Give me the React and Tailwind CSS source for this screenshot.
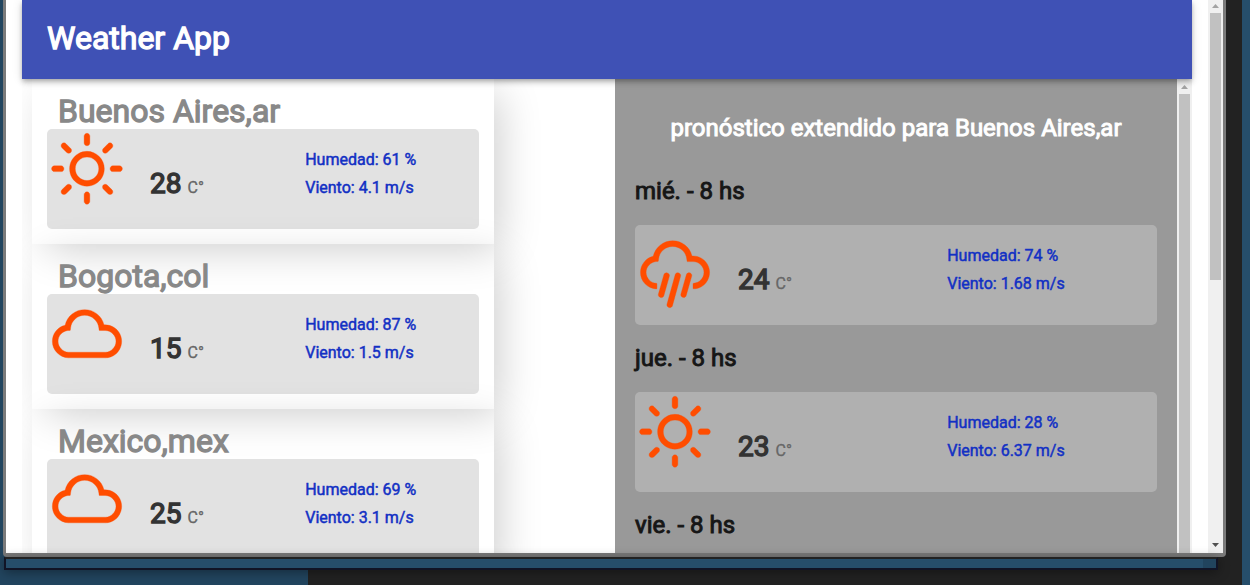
import React from "react";
import { WiDaySunny, WiCloud, WiRain } from "react-icons/wi";

const cities = [
  { name: "Buenos Aires,ar", data: { Icon: WiDaySunny, temp: 28, humidity: 61, wind: "4.1 m/s" } },
  { name: "Bogota,col", data: { Icon: WiCloud, temp: 15, humidity: 87, wind: "1.5 m/s" } },
  { name: "Mexico,mex", data: { Icon: WiCloud, temp: 25, humidity: 69, wind: "3.1 m/s" } },
];

const forecast = [
  { label: "mié. - 8 hs", data: { Icon: WiRain, temp: 24, humidity: 74, wind: "1.68 m/s" } },
  { label: "jue. - 8 hs", data: { Icon: WiDaySunny, temp: 23, humidity: 28, wind: "6.37 m/s" } },
  { label: "vie. - 8 hs" },
];

function WeatherData({ Icon, temp, humidity, wind, className }) {
  return (
    <div className={`flex h-[100px] overflow-hidden rounded-[5px] ${className}`}>
      <div className="flex w-3/5 shrink-0">
        <Icon
          className="-ml-[10px] -mt-[9px] size-[100px] shrink-0 text-[#ff4d00]"
          strokeWidth="0.1"
          aria-hidden="true"
        />
        <p className="ml-[13px] mt-[39px] whitespace-nowrap leading-8">
          <span className="text-[28px] text-[#333] [-webkit-text-stroke:0.05em]">{temp}</span>
          <span className="ml-[6px] text-base text-[#666] [-webkit-text-stroke:0.02em]">C°</span>
        </p>
      </div>
      <div className="-ml-px mt-[17px] whitespace-nowrap text-base leading-7 text-[#1230c4] [-webkit-text-stroke:0.03em]">
        <p>Humedad: {humidity} %</p>
        <p>Viento: {wind}</p>
      </div>
    </div>
  );
}

function Scrollbar({ thumb, className = "", arrowDown }) {
  return (
    <div className={`flex w-[15px] shrink-0 flex-col items-center bg-[#f0f0f0] ${className}`} aria-hidden="true">
      <svg className="h-[15px] w-[15px] shrink-0" viewBox="0 0 15 15">
        <path d="M4 10 L7.5 6 L11 10 Z" fill="#a3a3a3" />
      </svg>
      <div className={`w-[11px] bg-[#c1c1c1] ${thumb}`} />
      {arrowDown && (
        <svg className="mt-auto h-[15px] w-[15px] shrink-0" viewBox="0 0 15 15">
          <path d="M4 5 L11 5 L7.5 9 Z" fill="#505050" />
        </svg>
      )}
    </div>
  );
}

export default function App() {
  return (
    <div className="relative isolate flex h-screen flex-col overflow-hidden bg-[#222] font-['Roboto',sans-serif]">
      <div className="absolute inset-y-0 left-0 -z-10 w-[308px] bg-[#22455f]" />
      <div className="absolute inset-y-0 right-0 -z-10 w-2 bg-[#264e6b]" />

      <div className="ml-[3px] mr-6 flex min-h-0 flex-1 overflow-hidden rounded-b-[4px] border-x-[3px] border-b-[4px] border-[#7b7b7b] bg-white">
        <div className="flex min-w-0 flex-1 flex-col px-4">
          <header className="z-10 flex h-[79px] shrink-0 items-center bg-[#3f51b5] px-[25px] pb-1 shadow-[0_2px_4px_-1px_rgba(0,0,0,0.2),0_4px_5px_0_rgba(0,0,0,0.14),0_1px_10px_0_rgba(0,0,0,0.12)]">
            <h1 className="text-[32px] font-normal leading-10 text-white [-webkit-text-stroke:0.04em]">Weather App</h1>
          </header>
          <main className="flex min-h-0 flex-1">
            <section className="w-1/2 overflow-hidden pl-[10px]">
              {cities.map(({ name, data }) => (
                <article key={name} className="w-[462px] p-[15px] shadow-[10px_10px_40px_-5px_rgba(0,0,0,0.2)]">
                  <h2 className="pl-[11px] text-[32px] font-normal leading-[35px] text-[#888] [-webkit-text-stroke:0.04em]">
                    {name}
                  </h2>
                  <WeatherData {...data} className="bg-[#e2e2e2]" />
                </article>
              ))}
            </section>
            <section className="flex w-1/2 overflow-hidden pl-2">
              <div className="min-w-0 flex-1 bg-[#999] px-5 pt-[35px]">
                <h2 className="mb-9 text-center text-2xl font-normal leading-7 text-white [-webkit-text-stroke:0.04em]">
                  pronóstico extendido para Buenos Aires,ar
                </h2>
                {forecast.map(({ label, data }) => (
                  <div key={label} className="mb-5">
                    <h3 className="mb-5 text-2xl font-normal leading-[27px] text-[#161616] [-webkit-text-stroke:0.04em]">
                      {label}
                    </h3>
                    {data && <WeatherData {...data} className="bg-[#b0b0b0]" />}
                  </div>
                ))}
              </div>
              <Scrollbar thumb="flex-1" />
            </section>
          </main>
        </div>
        <Scrollbar className="-mt-[2px]" thumb="h-[267px]" arrowDown />
      </div>

      <div className="mb-[15px] ml-1 mr-8 flex h-[13px] shrink-0 justify-end border-2 border-[#111426] border-t-[#222] bg-[#264e6b] shadow-[0_2px_12px_rgba(0,0,0,0.4)]">
        <div className="w-[13px] bg-[#21445e]" />
      </div>
    </div>
  );
}
